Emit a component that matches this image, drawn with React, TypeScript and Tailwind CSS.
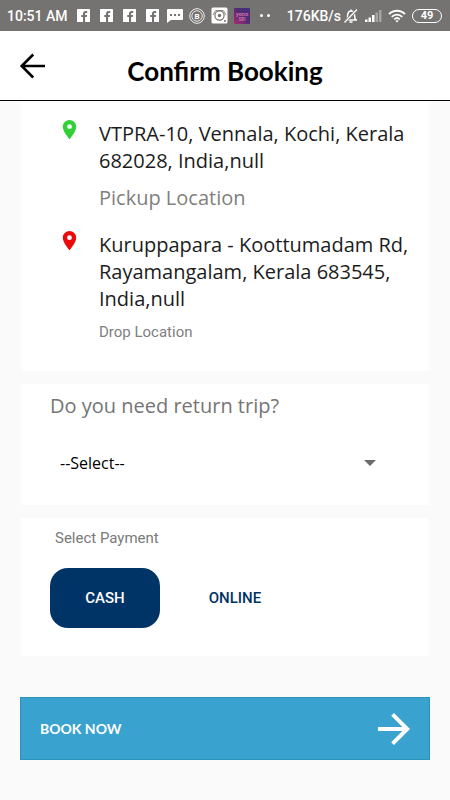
import { useState } from 'react';
import { MdArrowForward, MdPlace } from 'react-icons/md';

function FacebookIcon() {
  return (
    <svg viewBox="0 0 13 13" className="h-[13px] w-[13px]" aria-hidden="true">
      <rect width="13" height="13" rx="0.5" fill="#fff" />
      <path
        d="M6 13V8H4.3V6H6V4.7C6 2.9 7 2 8.7 2h1.5v1.9H9.1c-.8 0-1 .4-1 1V6h2L9.8 8H8.1v5z"
        fill="#757371"
      />
    </svg>
  );
}

function MessageIcon() {
  return (
    <svg viewBox="0 0 16 14" className="h-3.5 w-4" aria-hidden="true">
      <path d="M1 0h14a1 1 0 0 1 1 1v9a1 1 0 0 1-1 1H4l-4 3V1a1 1 0 0 1 1-1z" fill="#fff" />
      <path d="M3 5h2v2H3zM7 5h2v2H7zM11 5h2v2h-2z" fill="#757371" />
    </svg>
  );
}

function CoinIcon() {
  return (
    <svg viewBox="0 0 16 16" className="h-4 w-4" aria-hidden="true">
      <circle cx="8" cy="8" r="7.3" fill="none" stroke="#fff" strokeWidth="0.9" />
      <circle cx="8" cy="8" r="5.2" fill="none" stroke="#fff" strokeWidth="0.8" />
      <text x="8" y="10.8" fontSize="8" fontWeight="700" textAnchor="middle" fill="#fff">
        B
      </text>
    </svg>
  );
}

function CameraIcon() {
  return (
    <svg viewBox="0 0 17 17" className="h-[17px] w-[17px]" aria-hidden="true">
      <rect x="0.5" y="0.5" width="16" height="16" rx="1.5" fill="#fff" />
      <path d="M2 8l2.5-4.5h8L15 8" fill="none" stroke="#757371" strokeWidth="0.8" />
      <circle cx="8.5" cy="8.5" r="4.6" fill="#fff" stroke="#757371" strokeWidth="1.2" />
      <circle cx="8.5" cy="8.5" r="1.7" fill="#757371" />
      <circle cx="14" cy="14" r="1" fill="#757371" />
    </svg>
  );
}

function YonoIcon() {
  return (
    <svg viewBox="0 0 16 16" className="h-4 w-4" aria-hidden="true">
      <defs>
        <linearGradient id="yono" x1="1" y1="0" x2="0" y2="1">
          <stop offset="0" stopColor="#43307c" />
          <stop offset="0.5" stopColor="#542c74" />
          <stop offset="1" stopColor="#b02a72" />
        </linearGradient>
      </defs>
      <rect width="16" height="16" rx="1" fill="url(#yono)" />
      <text x="8" y="7.5" fontSize="5.5" fontWeight="700" textAnchor="middle" fill="#d070a8">
        yono
      </text>
      <text x="8" y="12.5" fontSize="4.5" fontWeight="700" textAnchor="middle" fill="#d070a8">
        SBI
      </text>
    </svg>
  );
}

function MutedBellIcon() {
  return (
    <svg viewBox="0 0 16 16" className="h-4 w-4" fill="none" stroke="#fff" aria-hidden="true">
      <path
        d="M8 1.5v1.2M2.5 12H14M4 12c.6-1 .6-2 .6-4.5C4.6 4.6 6 3 8 3s3.6 1.6 3.6 4.5c0 2.5.2 3.5 1.4 4.5M6.5 14h3"
        strokeWidth="1.5"
      />
      <path d="M1.5 14.5L14 1.5" stroke="#757371" strokeWidth="3" />
      <path d="M1.5 14.5L14 1.5" strokeWidth="1.3" />
    </svg>
  );
}

function SignalIcon() {
  return (
    <svg viewBox="0 0 17 12" className="h-3 w-[17px]" fill="#fff" aria-hidden="true">
      <rect x="0" y="9.5" width="2.5" height="2.5" />
      <rect x="3.5" y="7.5" width="2.5" height="4.5" />
      <rect x="7" y="5" width="2.5" height="7" />
      <rect x="10.5" y="2.5" width="2.5" height="9.5" fillOpacity="0.35" />
      <rect x="14" y="0" width="2.5" height="12" fillOpacity="0.35" />
    </svg>
  );
}

function WifiIcon() {
  return (
    <svg viewBox="0 0 18 14" className="h-3.5 w-[18px]" fill="none" stroke="#fff" aria-hidden="true">
      <path d="M1 5.2C5.5.6 12.5.6 17 5.2" strokeWidth="1.8" />
      <path d="M3.7 7.9c3-3 7.6-3 10.6 0" strokeWidth="1.8" />
      <path d="M6.2 10.3c1.6-1.5 4-1.5 5.6 0" strokeWidth="1.8" />
      <path d="M9 13.5l-1.7-1.7c1-.8 2.4-.8 3.4 0z" fill="#fff" stroke="none" />
    </svg>
  );
}

function StatusBar() {
  return (
    <div className="flex h-[31px] items-center justify-between bg-[#757371] pr-2 pl-[7px] text-sm font-medium text-white">
      <div className="flex items-center gap-2">
        <span className="whitespace-nowrap">10:51 AM</span>
        <div className="flex items-center gap-2.5 pl-px">
          <FacebookIcon />
          <FacebookIcon />
          <FacebookIcon />
          <FacebookIcon />
        </div>
        <div className="flex items-center gap-1.5 pr-0.5">
          <MessageIcon />
          <CoinIcon />
          <CameraIcon />
          <YonoIcon />
        </div>
        <div className="flex gap-1">
          <span className="h-[3px] w-[3px] rounded-full bg-white" />
          <span className="h-[3px] w-[3px] rounded-full bg-white" />
        </div>
      </div>
      <div className="flex items-center gap-1.5">
        <div className="flex items-center gap-0.5">
          <span>176KB/s</span>
          <MutedBellIcon />
        </div>
        <SignalIcon />
        <WifiIcon />
        <span className="flex h-3.5 w-[30px] items-center justify-center rounded-full border border-white text-[11px] leading-3 font-bold">
          49
        </span>
      </div>
    </div>
  );
}

interface StopProps {
  address: string;
  label: string;
  pinClass: string;
  labelClass: string;
}

function Stop({ address, label, pinClass, labelClass }: StopProps) {
  return (
    <div className="flex items-start gap-[18px]">
      <MdPlace className={`h-[23px] w-[23px] shrink-0 ${pinClass}`} />
      <div className="pt-0.5">
        <p className="text-xl leading-[27px] text-[#1c1c1c]">{address}</p>
        <p className={`mt-2.5 text-[#808080] ${labelClass}`}>{label}</p>
      </div>
    </div>
  );
}

const paymentMethods = ['CASH', 'ONLINE'];

export default function App() {
  const [payment, setPayment] = useState('CASH');

  return (
    <div className="min-h-screen bg-[#fafafa] font-['Roboto',sans-serif]">
      <StatusBar />

      <header className="grid h-[70px] grid-cols-[36px_1fr_36px] items-center border-b border-black bg-white px-3.5">
        <button type="button" aria-label="Back" className="flex justify-center">
          <svg
            viewBox="0 0 26 26"
            className="h-[26px] w-[26px]"
            fill="none"
            stroke="#000"
            strokeWidth="2.6"
            aria-hidden="true"
          >
            <path d="M26 13H3M14.2 1.5L2.7 13l11.5 11.5" />
          </svg>
        </button>
        <h1 className="pt-2.5 text-center font-['Lato',sans-serif] text-[26px] leading-8 font-bold text-black">
          Confirm Booking
        </h1>
      </header>

      <main className="px-5 pb-10">
        <div className="mx-px flex flex-col gap-[13px]">
          <section className="flex flex-col gap-[18px] bg-white pt-[17px] pr-3 pb-[29px] pl-[37px] font-['Open_Sans',sans-serif]">
            <Stop
              address="VTPRA-10, Vennala, Kochi, Kerala 682028, India,null"
              label="Pickup Location"
              pinClass="text-[#2fd135]"
              labelClass="text-xl leading-[27px]"
            />
            <Stop
              address="Kuruppapara - Koottumadam Rd, Rayamangalam, Kerala 683545, India,null"
              label="Drop Location"
              pinClass="text-[#ea0a0a]"
              labelClass="font-['Roboto',sans-serif] text-[15px] leading-5"
            />
          </section>

          <section className="bg-white px-[29px] pt-2 pb-6 font-['Open_Sans',sans-serif]">
            <label htmlFor="return-trip" className="block text-xl leading-7 text-[#757575]">
              Do you need return trip?
            </label>
            <div className="mt-[25px] grid items-center">
              <select
                id="return-trip"
                className="col-start-1 row-start-1 h-9 w-full appearance-none bg-transparent pl-2.5 text-base text-black"
              >
                <option>--Select--</option>
                <option>Yes</option>
                <option>No</option>
              </select>
              <svg
                viewBox="0 0 12 6"
                className="pointer-events-none col-start-1 row-start-1 mr-6 h-1.5 w-3 justify-self-end"
                aria-hidden="true"
              >
                <path d="M0 0h12L6 6z" fill="#6b6b6b" />
              </svg>
            </div>
          </section>

          <section className="bg-white px-[29px] pt-2.5 pb-7">
            <h2 className="pl-[5px] text-[15px] leading-5 text-[#7a7a7a]">Select Payment</h2>
            <div className="mt-5 flex gap-5">
              {paymentMethods.map((method) => (
                <button
                  key={method}
                  type="button"
                  aria-pressed={payment === method}
                  onClick={() => setPayment(method)}
                  className={`h-[60px] w-[110px] rounded-[18px] text-[15px] font-medium ${
                    payment === method ? 'bg-[#003366] text-white' : 'text-[#003366]'
                  }`}
                >
                  {method}
                </button>
              ))}
            </div>
          </section>
        </div>

        <button
          type="button"
          className="mt-[41px] flex h-[63px] w-full items-center justify-between border border-[#2b93b8] bg-[#3aa2cf] pr-[11px] pl-[19px] font-['Lato',sans-serif] text-sm font-bold text-white"
        >
          BOOK NOW
          <MdArrowForward className="h-12 w-12" />
        </button>
      </main>
    </div>
  );
}
